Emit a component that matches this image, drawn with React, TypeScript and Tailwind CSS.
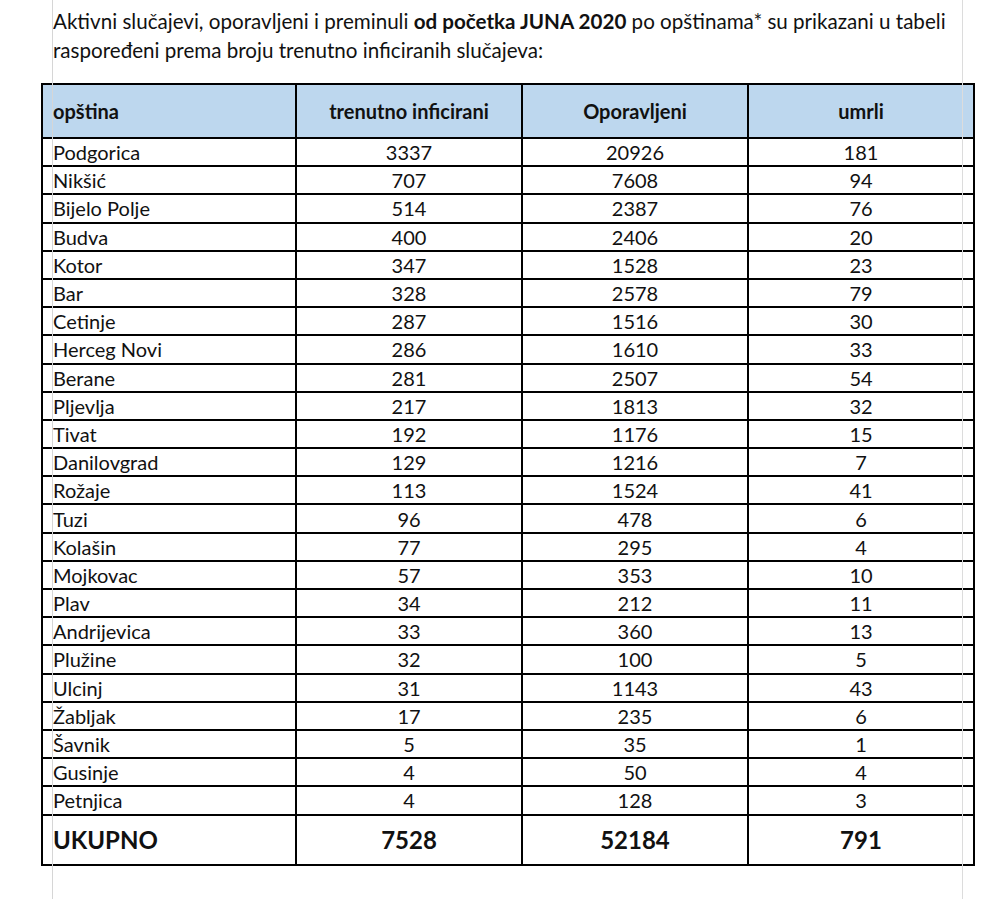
import React from 'react';

const ROWS: [string, number, number, number][] = [
  ['Podgorica', 3337, 20926, 181],
  ['Nikšić', 707, 7608, 94],
  ['Bijelo Polje', 514, 2387, 76],
  ['Budva', 400, 2406, 20],
  ['Kotor', 347, 1528, 23],
  ['Bar', 328, 2578, 79],
  ['Cetinje', 287, 1516, 30],
  ['Herceg Novi', 286, 1610, 33],
  ['Berane', 281, 2507, 54],
  ['Pljevlja', 217, 1813, 32],
  ['Tivat', 192, 1176, 15],
  ['Danilovgrad', 129, 1216, 7],
  ['Rožaje', 113, 1524, 41],
  ['Tuzi', 96, 478, 6],
  ['Kolašin', 77, 295, 4],
  ['Mojkovac', 57, 353, 10],
  ['Plav', 34, 212, 11],
  ['Andrijevica', 33, 360, 13],
  ['Plužine', 32, 100, 5],
  ['Ulcinj', 31, 1143, 43],
  ['Žabljak', 17, 235, 6],
  ['Šavnik', 5, 35, 1],
  ['Gusinje', 4, 50, 4],
  ['Petnjica', 4, 128, 3],
];

const App: React.FC = () => {
  return (
    <div className="relative w-[1000px] h-[899px] overflow-hidden bg-white text-[#111] font-['Lato','Noto_Sans',sans-serif]">
      {/* margin guides of the document page */}
      <div className="absolute top-0 bottom-0 left-[52px] w-px bg-[#d6d6d6] z-10"></div>
      <div className="absolute top-0 bottom-0 left-[962px] w-px bg-[#dcdcdc] z-10"></div>

      <p className="pl-[53px] pt-[7px] text-[20.6px] leading-[29px] whitespace-nowrap">
        Aktivni slučajevi, oporavljeni i preminuli <b>od početka JUNA 2020</b> po opštinama* su prikazani u tabeli
        <br />
        raspoređeni prema broju trenutno inficiranih slučajeva:
      </p>

      <table className="ml-[41px] mt-[18px] w-[932px] table-fixed border-collapse border-2 border-black text-[20px]">
        <colgroup>
          <col className="w-[254px]" />
          <col className="w-[226px]" />
          <col className="w-[226px]" />
          <col className="w-[226px]" />
        </colgroup>
        <thead>
          <tr className="h-[54px] bg-[#bdd7ee]">
            <th className="border-2 border-black pl-[10px] text-left font-bold">opština</th>
            <th className="border-2 border-black text-center font-bold">trenutno inficirani</th>
            <th className="border-2 border-black text-center font-bold">Oporavljeni</th>
            <th className="border-2 border-black text-center font-bold">umrli</th>
          </tr>
        </thead>
        <tbody>
          {ROWS.map(([name, active, recovered, dead]) => (
            <tr key={name} className="h-[28.2px] leading-none">
              <td className="border-2 border-black pl-[10px]">{name}</td>
              <td className="border-2 border-black text-center">{active}</td>
              <td className="border-2 border-black text-center">{recovered}</td>
              <td className="border-2 border-black text-center">{dead}</td>
            </tr>
          ))}
          <tr className="h-[50px] text-[24px] font-bold">
            <td className="border-2 border-black pl-[10px]">UKUPNO</td>
            <td className="border-2 border-black text-center">7528</td>
            <td className="border-2 border-black text-center">52184</td>
            <td className="border-2 border-black text-center">791</td>
          </tr>
        </tbody>
      </table>
    </div>
  );
};

export default App;
